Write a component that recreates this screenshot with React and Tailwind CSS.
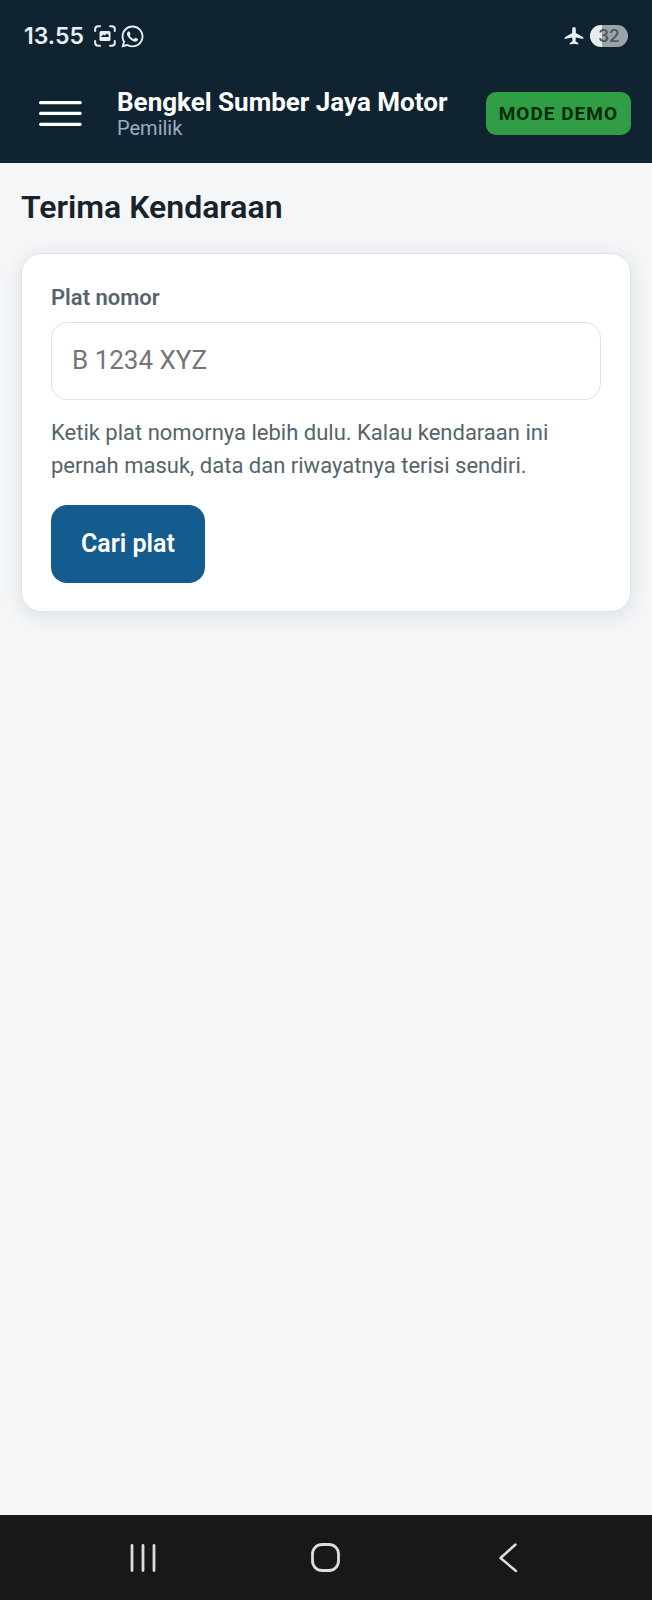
import { useState } from "react";
import { FaWhatsapp } from "react-icons/fa";

const CaptureIcon = () => (
  <svg width="22" height="22" viewBox="0 0 22 22" fill="none">
    <path
      d="M1.200 6V4.200a3 3 0 0 1 3-3H6M16 1.200h1.800a3 3 0 0 1 3 3V6M20.800 16v1.800a3 3 0 0 1-3 3H16M6 20.800H4.200a3 3 0 0 1-3-3V16"
      stroke="currentColor"
      strokeWidth="2"
      strokeLinecap="round"
    />
    <path
      fillRule="evenodd"
      fill="currentColor"
      d="M7 6h8a1.500 1.500 0 0 1 1.500 1.500v7A1.500 1.500 0 0 1 15 16H7a1.500 1.500 0 0 1-1.500-1.500v-7A1.500 1.500 0 0 1 7 6zM7.300 12h7.400v-1.800l-1.700-1.700-2.200 2-1.300-.9-2.200 1.700z"
    />
  </svg>
);

const AirplaneIcon = () => (
  <svg width="20" height="20" viewBox="0 0 20 20" fill="currentColor">
    <path d="M10 1c1.100 0 1.800.9 1.800 2v4l7 3.900c.5.300.6.600.6 1.100v.9l-7.600-1.300-.3 3.700 2.300 1.500c.3.200.4.500.4.800v.8L10 17.700l-4.200.7v-.8c0-.3.100-.6.400-.8l2.300-1.500-.3-3.700L.6 12.900V12c0-.5.100-.8.600-1.100l7-3.900V3c0-1.100.7-2 1.800-2z" />
  </svg>
);

const StatusBar = () => (
  <div className="flex h-16 items-center justify-between pt-2 pr-6 pl-6 text-[#e8f0f6]">
    <div className="flex items-center">
      <span className="font-['Inter',sans-serif] text-[23px] leading-6 font-semibold">
        13.55
      </span>
      <span className="ml-[10px] flex items-center gap-1">
        <CaptureIcon />
        <FaWhatsapp size={25} />
      </span>
    </div>
    <div className="flex items-center gap-[6px]">
      <AirplaneIcon />
      {/* Battery */}
      <span className="flex h-[22px] w-[38px] items-center justify-center rounded-full bg-linear-to-r from-[#e8ecef] from-32% to-[#9aa3aa] to-32% font-['Inter',sans-serif] text-[17px] leading-5 font-semibold text-[#54595e]">
        32
      </span>
    </div>
  </div>
);

const Header = () => (
  <header className="bg-[#102331]">
    <StatusBar />
    <div className="flex h-[99px] items-center pr-[21px] pl-[39px]">
      <button type="button" aria-label="Menu" className="mr-[34px] text-white">
        <svg width="44" height="27" viewBox="0 0 44 27" fill="none">
          <path
            d="M1.600 2.700h39.600M1.600 13.400h39.600M1.600 24.300h39.600"
            stroke="currentColor"
            strokeWidth="3.200"
            strokeLinecap="round"
          />
        </svg>
      </button>
      <div className="min-w-0 flex-1">
        <div className="text-[26px] leading-7 font-bold whitespace-nowrap text-white">
          Bengkel Sumber Jaya Motor
        </div>
        <div className="text-[20px] leading-6 text-[#9bacc0]">Pemilik</div>
      </div>
      <span className="rounded-[10px] bg-[#2f9e44] px-[13px] py-2 text-[19px] leading-[27px] font-bold tracking-[1px] whitespace-nowrap text-[#062b0c]">
        MODE DEMO
      </span>
    </div>
  </header>
);

const PlateForm = () => {
  const [plate, setPlate] = useState("");

  const handleSubmit = (e) => {
    e.preventDefault();
  };

  return (
    <form
      className="flex flex-col items-start rounded-[20px] border border-[#dfe3e8] bg-white px-[29px] py-7 shadow-[0_4px_20px_rgba(16,50,70,0.10)]"
      onSubmit={handleSubmit}
    >
      <label
        htmlFor="plate"
        className="text-[22px] leading-8 font-semibold text-[#55646b]"
      >
        Plat nomor
      </label>
      <input
        className="mt-2 h-[78px] w-full rounded-2xl border border-[#dfe1e4] bg-white px-5 pb-[2px] text-[26px] text-[#18222a] placeholder:text-[#757575] focus:border-[#135c8d] focus:outline-none"
        id="plate"
        name="plate"
        placeholder="B 1234 XYZ"
        value={plate}
        onChange={(e) => setPlate(e.target.value)}
      />
      <p className="mt-4 text-[22px] leading-[33px] text-[#55646b]">
        Ketik plat nomornya lebih dulu. Kalau kendaraan ini pernah masuk, data
        dan riwayatnya terisi sendiri.
      </p>
      <button className="mt-[23px] h-[78px] rounded-2xl bg-[#135c8d] px-[30px] text-[25px] font-semibold text-white hover:bg-[#0f4d77]">
        Cari plat
      </button>
    </form>
  );
};

// Android style navigation buttons
const NavBar = () => (
  <nav className="grid h-[85px] grid-cols-3 place-items-center bg-[#17181a] px-[52px] text-[#dcdddf]">
    <button type="button" aria-label="Recent apps">
      <svg width="30" height="30" viewBox="0 0 30 30" fill="none">
        <path
          d="M4 2.500v25M15 2.500v25M26 2.500v25"
          stroke="currentColor"
          strokeWidth="2.800"
          strokeLinecap="round"
        />
      </svg>
    </button>
    <button type="button" aria-label="Home">
      <svg width="30" height="30" viewBox="0 0 30 30" fill="none">
        <rect
          x="1.500"
          y="1.500"
          width="26"
          height="26"
          rx="9.500"
          stroke="currentColor"
          strokeWidth="2.800"
        />
      </svg>
    </button>
    <button type="button" aria-label="Back">
      <svg width="30" height="30" viewBox="0 0 30 30" fill="none">
        <path
          d="M21.500 1.500L6.500 15l15.500 13"
          stroke="currentColor"
          strokeWidth="2.500"
          strokeLinecap="round"
          strokeLinejoin="round"
        />
      </svg>
    </button>
  </nav>
);

const App = () => {
  return (
    <div className="flex min-h-screen flex-col bg-[#f4f6f8] font-['Roboto',sans-serif]">
      <Header />
      <main className="flex-1 px-[21px] pt-6">
        <h1 className="mb-[26px] text-[32px] leading-10 font-semibold text-[#18222a]">
          Terima Kendaraan
        </h1>
        <PlateForm />
      </main>
      <NavBar />
    </div>
  );
};

export default App;
